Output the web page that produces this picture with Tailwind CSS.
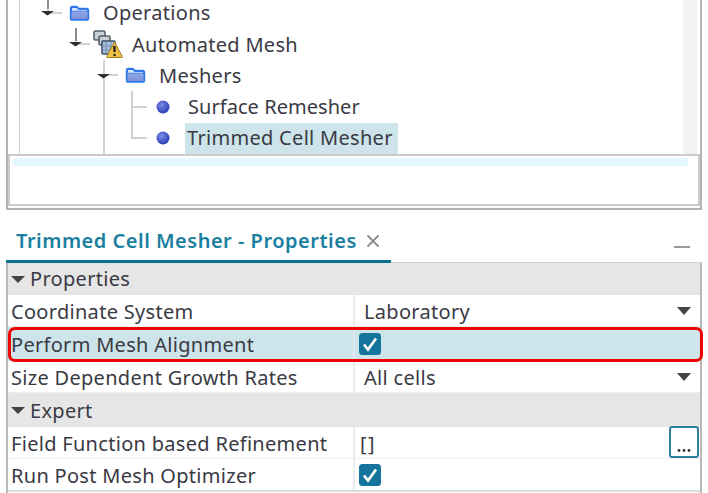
<!DOCTYPE html>
<html>
<head>
<script src="https://cdn.jsdelivr.net/npm/@tailwindcss/browser@4"></script>
</head>
<body class="bg-white">
<div class="relative w-[708px] h-[493px] overflow-hidden bg-white font-['Noto_Sans','Open_Sans',sans-serif] text-[20px] tracking-[.3px] leading-none text-[#3a3a44]">

  <!-- Tree panel -->
  <section class="ml-[6px] w-[696px] h-[210px] border-x-2 border-b-2 border-[#b4b4b4] flex flex-col">
    <div class="relative h-[154px] flex pl-[11px]">
      <div class="flex-1 border-l border-[#cfcfcf] flex flex-col pl-[41px]">
        <div class="h-[31px] flex items-center mt-[-2px]">
          <svg class="w-[21px] h-[17px] ml-[8px] mr-[13px]" viewBox="0 0 21 17"><defs><linearGradient id="f1" x1="0" y1="0" x2="0" y2="1"><stop offset="0" stop-color="#8fa6e6"/><stop offset="1" stop-color="#7f93d8"/></linearGradient></defs><path d="M.8 3.500q0-2.700 2.700-2.700h4.500l2 2h7.500q2.700 0 2.700 2.700v8.500q0 1.700-1.700 1.700H2.500q-1.700 0-1.700-1.700z" fill="#2f78ea"/><path d="M2.500 6.500h16v7.500h-16z" fill="url(#f1)"/><path d="M3 3h4.500l2 2h8.500v.8H3z" fill="#d8e6fc"/></svg>
          <span>Operations</span>
        </div>
        <div class="h-[32px] flex items-center">
          <svg class="w-[30px] h-[30px] ml-[32px] mr-[9px]" viewBox="0 0 30 30"><rect x="1" y="1" width="11" height="9" rx="1.500" fill="#c8d0d8" stroke="#56606c" stroke-width="1.600"/><rect x="6" y="6" width="11" height="9" rx="1.500" fill="#c8d0d8" stroke="#56606c" stroke-width="1.600"/><rect x="9" y="11" width="13" height="13" rx="1" fill="#a8c0dc" stroke="#3e5064" stroke-width="1.600"/><path d="M13 11v13M18 11v13M9 16h13M9 20h13" stroke="#6e88a4" stroke-width=".8"/><path d="M21.500 12l7.800 14.500q.4 1-.6 1H14.300q-1 0-.6-1z" fill="#f0c040" stroke="#a07a20"/><path d="M21.500 16v6" stroke="#222" stroke-width="2.400"/><circle cx="21.500" cy="25" r="1.300" fill="#222"/></svg>
          <span>Automated Mesh</span>
        </div>
        <div class="h-[31px] flex items-center">
          <svg class="w-[21px] h-[17px] ml-[64px] mr-[13px]" viewBox="0 0 21 17"><path d="M.8 3.500q0-2.700 2.700-2.700h4.500l2 2h7.500q2.700 0 2.700 2.700v8.500q0 1.700-1.700 1.700H2.500q-1.700 0-1.700-1.700z" fill="#2f78ea"/><path d="M2.500 6.500h16v7.500h-16z" fill="url(#f1)"/><path d="M3 3h4.500l2 2h8.500v.8H3z" fill="#d8e6fc"/></svg>
          <span>Meshers</span>
        </div>
        <div class="h-[31px] flex items-center">
          <svg class="w-[14px] h-[14px] ml-[95px] mr-[18px]" viewBox="0 0 14 14"><defs><radialGradient id="b1" cx=".4" cy=".35" r=".7"><stop offset="0" stop-color="#7c8ce6"/><stop offset="1" stop-color="#2438b4"/></radialGradient></defs><circle cx="7" cy="7" r="6.500" fill="url(#b1)"/></svg>
          <span class="tracking-[.05px]">Surface Remesher</span>
        </div>
        <div class="h-[32px] flex items-center">
          <svg class="w-[14px] h-[14px] ml-[95px] mr-[15px]" viewBox="0 0 14 14"><circle cx="7" cy="7" r="6.500" fill="url(#b1)"/></svg>
          <span class="h-[31px] pl-[2px] pr-[5px] flex items-center bg-[#cde4ea]">Trimmed Cell Mesher</span>
        </div>
      </div>
      <div class="w-[14px] mr-[3px] bg-[#f2f2f2]"></div>
      <!-- tree connectors -->
      <svg class="absolute left-[-8px] top-0 w-[160px] h-[155px]" viewBox="0 0 160 155" fill="none">
        <g stroke="#c4c4c4" stroke-width="1.500">
          <path d="M48 0v12M48 13h14M76 28v16M76 44h14M104 60v95M104 75h14M132 91v47h15M132 107h15"/>
        </g>
        <g stroke="#777" stroke-width="1.500"><path d="M48 0v9M76 28v13"/></g>
        <g fill="#303030"><path d="M41 11h13l-6.500 4.500zM69 42h13l-6.500 4.500zM97 74h13l-6.500 4.500z"/></g>
      </svg>
    </div>
    <div class="h-[52px] border-2 border-[#cbcbcb] bg-white pt-[2px] pl-[3px] pr-[10px]">
      <div class="h-[8px] rounded-[2px] bg-[#e2f9fd]"></div>
    </div>
  </section>

  <!-- Properties panel -->
  <section class="ml-[6px] w-[696px] mt-[18px]">
    <header class="h-[35px] flex items-start relative">
      <div class="w-[385px] h-[35px] border-b-[3px] border-[#0b7194] pl-[10px] flex items-start">
        <span class="font-semibold text-[#1a7fa0] text-[20px] tracking-[.5px] leading-[25px]">Trimmed Cell Mesher - Properties</span>
        <svg class="w-[14px] h-[14px] ml-[9px] mt-[6px]" viewBox="0 0 14 14" stroke="#8c8c8c" stroke-width="1.800" fill="none"><path d="M1.500 1.500l11 11M12.500 1.500l-11 11"/></svg>
      </div>
      <div class="flex-1 h-[35px] border-b border-[#d0d0d0] flex justify-end pr-[12px]">
        <div class="w-[16px] h-[2px] mt-[18px] bg-[#9a9a9a]"></div>
      </div>
    </header>
    <div class="border-x-2 border-[#b8b8b8] h-[235px]">
      <div class="h-[32px] bg-[#e6e6e6] flex items-center pl-[3px]">
        <svg class="w-[14px] h-[7px] mr-[5px]" viewBox="0 0 14 7"><path d="M0 0h14L7 7z" fill="#444"/></svg><span>Properties</span>
      </div>
      <div class="h-[32px] flex border-b border-dotted border-[#e0e0e0]">
        <div class="w-[347px] border-r-2 border-[#ececec] flex items-center pl-[3px] pt-[2px]">Coordinate System</div>
        <div class="flex-1 flex items-center justify-between pl-[9px] pr-[9px]"><span class="pt-[2px]">Laboratory</span><svg class="w-[14px] h-[8px]" viewBox="0 0 14 8"><path d="M0 0h14L7 8z" fill="#444"/></svg></div>
      </div>
      <div class="h-[34px] flex bg-[#cde4ea]">
        <div class="w-[347px] border-r-2 border-[#dcecf0] flex items-center pl-[3px] pt-[2px]">Perform Mesh Alignment</div>
        <div class="flex-1 flex items-center pl-[4px]">
          <svg class="w-[22px] h-[22px]" viewBox="0 0 22 22"><rect width="22" height="22" rx="3.500" fill="#15749c"/><path d="M5 11.500l4 5 8-11" fill="none" stroke="#fff" stroke-width="2.600"/></svg>
        </div>
      </div>
      <div class="h-[32px] flex border-b border-dotted border-[#e0e0e0]">
        <div class="w-[347px] border-r-2 border-[#ececec] flex items-center pl-[3px] pt-[2px]">Size Dependent Growth Rates</div>
        <div class="flex-1 flex items-center justify-between pl-[9px] pr-[9px]"><span class="pt-[2px]">All cells</span><svg class="w-[14px] h-[8px]" viewBox="0 0 14 8"><path d="M0 0h14L7 8z" fill="#444"/></svg></div>
      </div>
      <div class="h-[34px] bg-[#e6e6e6] flex items-center pl-[3px]">
        <svg class="w-[14px] h-[7px] mr-[5px]" viewBox="0 0 14 7"><path d="M0 0h14L7 7z" fill="#444"/></svg><span class="pt-[1px]">Expert</span>
      </div>
      <div class="h-[32px] flex border-b border-dotted border-[#e0e0e0]">
        <div class="w-[347px] border-r-2 border-[#ececec] flex items-center pl-[3px] pt-[2px]">Field Function based Refinement</div>
        <div class="flex-1 flex items-center justify-between pl-[5px] pr-[1px]">
          <span class="pt-[2px] tracking-[1.500px]">[]</span>
          <div class="w-[30px] h-[32px] mt-[-2px] border-2 border-[#2f7f9f] rounded-[3px] bg-white flex items-end justify-center pb-[3px]">
            <svg class="w-[14px] h-[5px]" viewBox="0 0 14 5" fill="#333"><circle cx="2" cy="2.500" r="1.400"/><circle cx="7" cy="2.500" r="1.400"/><circle cx="12" cy="2.500" r="1.400"/></svg>
          </div>
        </div>
      </div>
      <div class="h-[33px] flex border-b-2 border-[#dcdcdc]">
        <div class="w-[347px] border-r-2 border-[#ececec] flex items-center pl-[3px] pt-[3px]">Run Post Mesh Optimizer</div>
        <div class="flex-1 flex items-center pl-[4px]">
          <svg class="w-[22px] h-[22px]" viewBox="0 0 22 22"><rect width="22" height="22" rx="3.500" fill="#15749c"/><path d="M5 11.500l4 5 8-11" fill="none" stroke="#fff" stroke-width="2.600"/></svg>
        </div>
      </div>
    </div>
  </section>

  <!-- red annotation -->
  <div class="absolute left-[8px] top-[327px] w-[695px] h-[35px] border-[3px] border-[#ee0000] rounded-[7px]"></div>
</div>
</body>
</html>
